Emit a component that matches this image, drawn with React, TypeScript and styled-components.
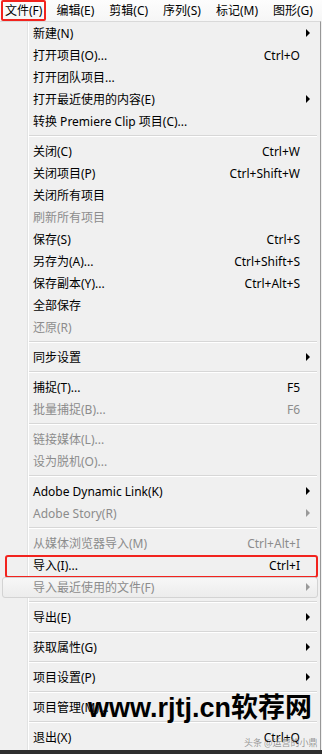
import React from "react";
import styled, { createGlobalStyle } from "styled-components";

const GlobalStyle = createGlobalStyle`
    html, body {
        margin: 0;
        padding: 0;
        background: #f0f0f0;
    }
    * {
        box-sizing: border-box;
    }
`

const Page = styled.div`
    position: relative;
    width: 322px;
    height: 754px;
    overflow: hidden;
    display: flex;
    flex-direction: column;
    font-family: "Noto Sans", "Noto Sans CJK SC", sans-serif;
    font-size: 12px;
    color: #000;
    background: #f0f0f0;
`

const MenuBar = styled.div`
    display: flex;
    align-items: stretch;
    height: 21px;
    padding-left: 1px;
    background: linear-gradient(#fdfdfd, #f6f6f6);
`

const BarItem = styled.div<{ $marked?: boolean }>`
    display: flex;
    align-items: center;
    padding: 0 ${(p) => (p.$marked ? "2px" : "4px")};
    margin-right: ${(p) => (p.$marked ? "6px" : "7px")};
    border: ${(p) => (p.$marked ? "2px solid #f2231e" : "none")};
    border-radius: 2px;
    white-space: nowrap;
    line-height: 1;
`

const Panel = styled.div`
    display: flex;
    flex-direction: column;
    width: 321px;
    padding-bottom: 2px;
    border-top: 1px solid #d9d9d9;
    border-right: 1px solid #979797;
    background:
        linear-gradient(to right, transparent 27px, #e2e3e3 27px, #e2e3e3 28px, #ffffff 28px, #ffffff 29px, transparent 29px),
        #f0f0f0;
`

const Row = styled.div<{ $disabled?: boolean; $marked?: boolean; $hover?: boolean }>`
    position: relative;
    display: grid;
    grid-template-columns: 1fr auto 16px;
    align-items: center;
    height: 22px;
    padding: 0 4px 0 33px;
    white-space: nowrap;
    color: ${(p) => (p.$disabled ? "#8c8c8c" : "#000")};

    &::before {
        content: "";
        display: ${(p) => (p.$hover ? "block" : "none")};
        position: absolute;
        left: 2px;
        right: 2px;
        top: 1px;
        bottom: 0;
        border: 1px solid #d3d3d3;
        border-radius: 3px;
        background: linear-gradient(#f7f7f7, #ececec);
    }

    &::after {
        content: "";
        display: ${(p) => (p.$marked ? "block" : "none")};
        position: absolute;
        left: 5px;
        right: 2px;
        top: 1px;
        bottom: -2px;
        border: 2px solid #f2231e;
        border-radius: 3px;
    }
`

const Label = styled.span`
    position: relative;
`

const Shortcut = styled.span`
    position: relative;
    text-align: right;
`

const Arrow = styled.span<{ $disabled?: boolean }>`
    position: relative;
    justify-self: center;
    width: 0;
    height: 0;
    border-top: 4px solid transparent;
    border-bottom: 4px solid transparent;
    border-left: 4px solid ${(p) => (p.$disabled ? "#9a9a9a" : "#000")};
`

const Separator = styled.div`
    height: 8px;
    margin: 0 3px 0 29px;
    display: flex;
    flex-direction: column;
    justify-content: center;

    &::before {
        content: "";
        height: 1px;
        background: #d7d7d7;
    }
    &::after {
        content: "";
        height: 1px;
        background: #ffffff;
    }
`

const BottomStrip = styled.div`
    flex: 1;
    background: #2e2e2e;
`

const Watermark = styled.div`
    position: absolute;
    left: 88px;
    top: 686px;
    font-family: "Liberation Sans", "Noto Sans CJK SC", sans-serif;
    font-weight: bold;
    font-size: 27px;
    color: #000;
    white-space: nowrap;
`

const Credit = styled.div`
    position: absolute;
    left: 244px;
    top: 736px;
    font-family: "Noto Sans CJK SC", sans-serif;
    font-size: 9px;
    color: rgba(120, 120, 120, 0.75);
    white-space: nowrap;
`

type Item =
    | "sep"
    | {
          label: string;
          key?: string;
          sub?: boolean;
          disabled?: boolean;
          marked?: boolean;
          hover?: boolean;
      };

const items: Item[] = [
    { label: "新建(N)", sub: true },
    { label: "打开项目(O)...", key: "Ctrl+O" },
    { label: "打开团队项目..." },
    { label: "打开最近使用的内容(E)", sub: true },
    { label: "转换 Premiere Clip 项目(C)..." },
    "sep",
    { label: "关闭(C)", key: "Ctrl+W" },
    { label: "关闭项目(P)", key: "Ctrl+Shift+W" },
    { label: "关闭所有项目" },
    { label: "刷新所有项目", disabled: true },
    { label: "保存(S)", key: "Ctrl+S" },
    { label: "另存为(A)...", key: "Ctrl+Shift+S" },
    { label: "保存副本(Y)...", key: "Ctrl+Alt+S" },
    { label: "全部保存" },
    { label: "还原(R)", disabled: true },
    "sep",
    { label: "同步设置", sub: true },
    "sep",
    { label: "捕捉(T)...", key: "F5" },
    { label: "批量捕捉(B)...", key: "F6", disabled: true },
    "sep",
    { label: "链接媒体(L)...", disabled: true },
    { label: "设为脱机(O)...", disabled: true },
    "sep",
    { label: "Adobe Dynamic Link(K)", sub: true },
    { label: "Adobe Story(R)", sub: true, disabled: true },
    "sep",
    { label: "从媒体浏览器导入(M)", key: "Ctrl+Alt+I", disabled: true },
    { label: "导入(I)...", key: "Ctrl+I", marked: true },
    { label: "导入最近使用的文件(F)", sub: true, disabled: true, hover: true },
    "sep",
    { label: "导出(E)", sub: true },
    "sep",
    { label: "获取属性(G)", sub: true },
    "sep",
    { label: "项目设置(P)", sub: true },
    "sep",
    { label: "项目管理(M)..." },
    "sep",
    { label: "退出(X)", key: "Ctrl+Q" },
];

const menus = ["文件(F)", "编辑(E)", "剪辑(C)", "序列(S)", "标记(M)", "图形(G)"];

export default function App() {
    return (
        <Page>
            <GlobalStyle />
            <MenuBar>
                {menus.map((m, i) => (
                    <BarItem key={m} $marked={i === 0}>
                        {m}
                    </BarItem>
                ))}
            </MenuBar>
            <Panel>
                {items.map((it, i) =>
                    it === "sep" ? (
                        <Separator key={i} />
                    ) : (
                        <Row key={i} $disabled={it.disabled} $marked={it.marked} $hover={it.hover}>
                            <Label>{it.label}</Label>
                            <Shortcut>{it.key}</Shortcut>
                            {it.sub ? <Arrow $disabled={it.disabled} /> : <span />}
                        </Row>
                    )
                )}
            </Panel>
            <BottomStrip />
            <Watermark>www.rjtj.cn软荐网</Watermark>
            <Credit>头条 @运营的小鼎</Credit>
        </Page>
    );
}
